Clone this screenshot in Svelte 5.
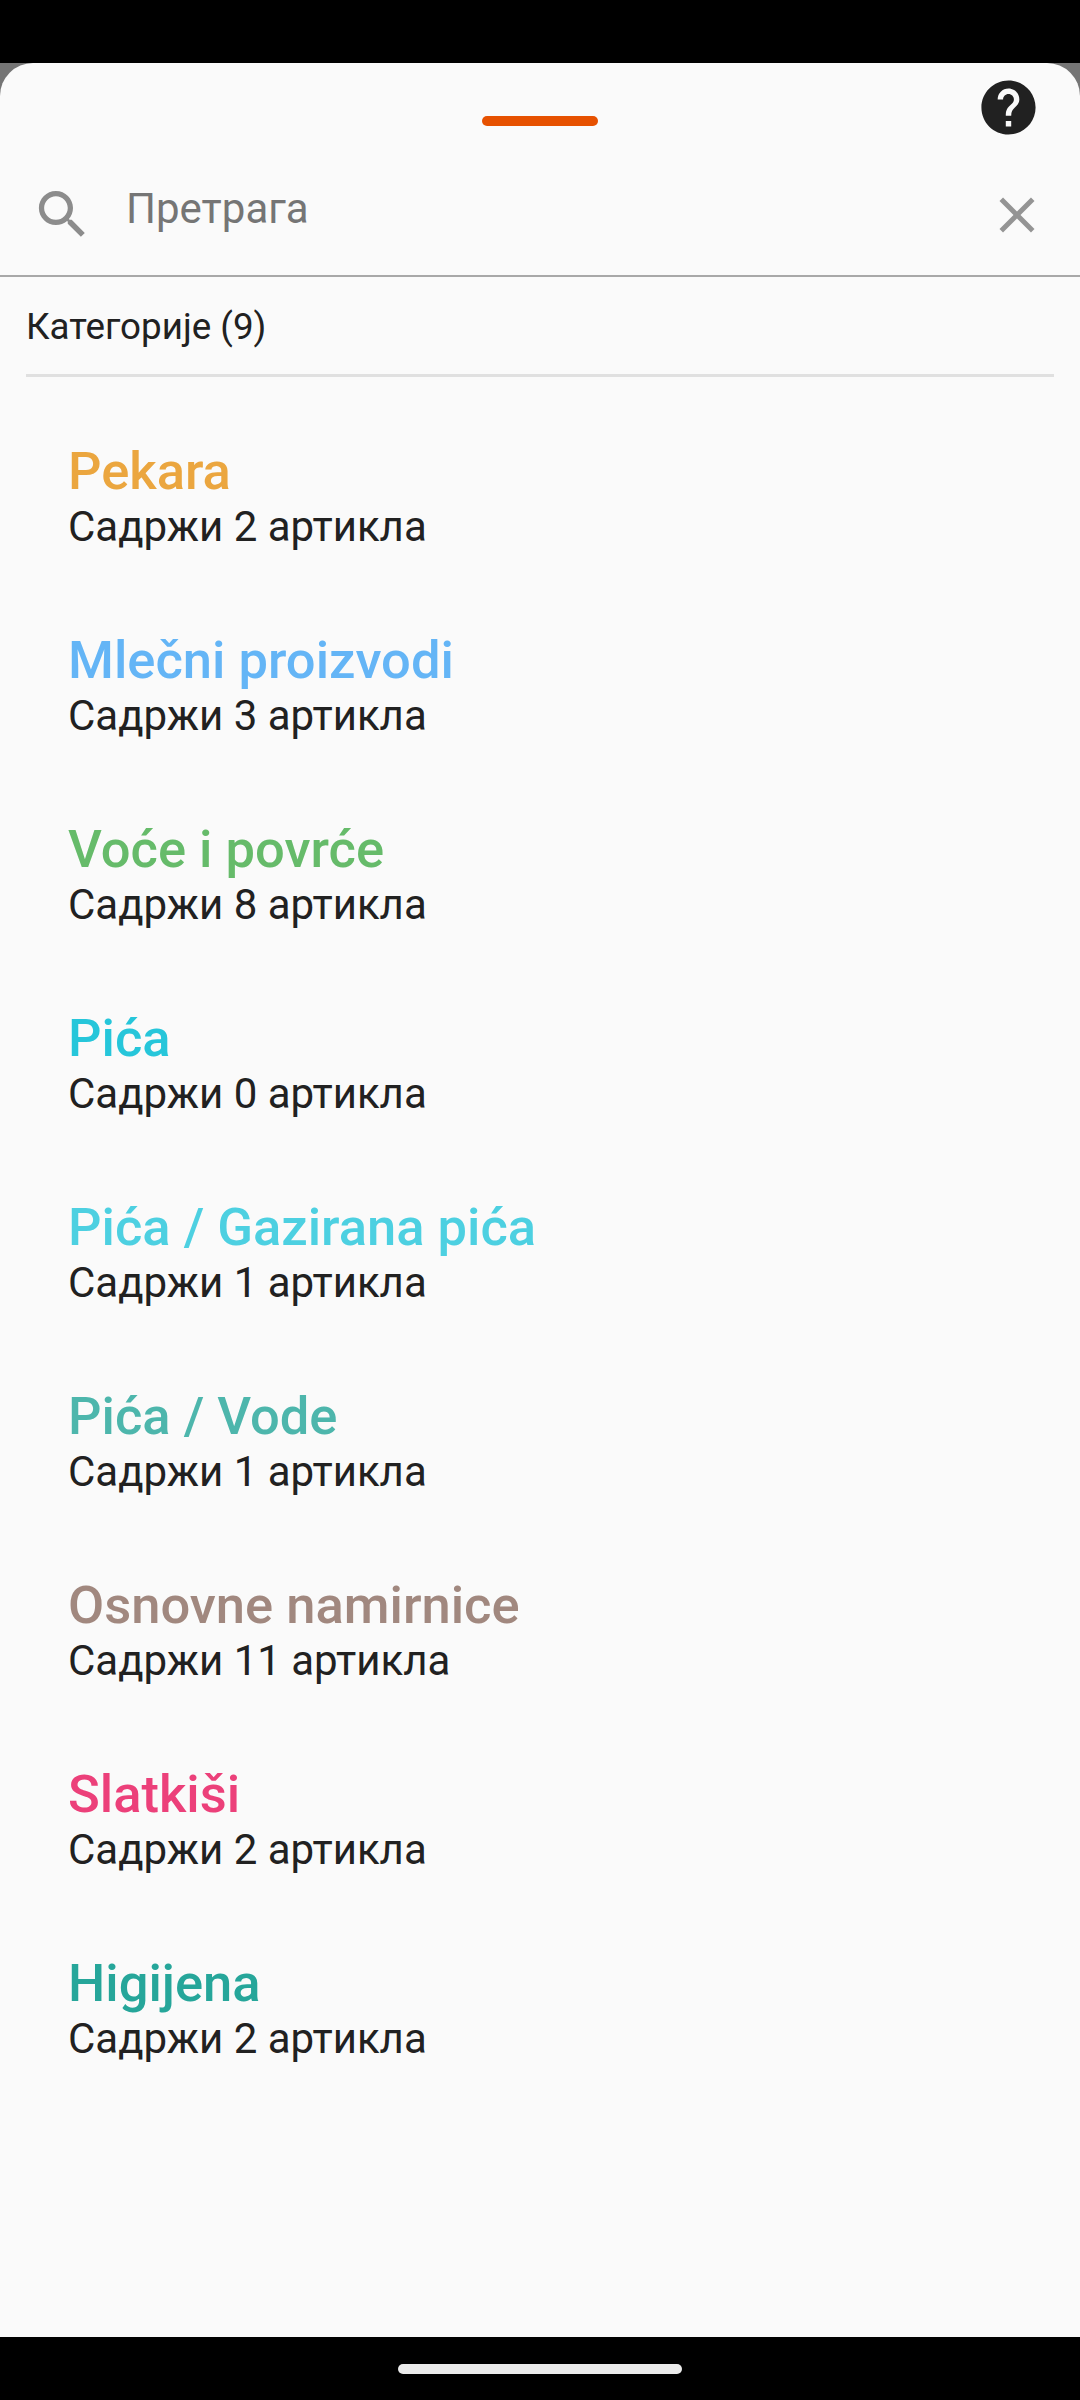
<script>
  const items = [
    { name: 'Pekara', color: '#eba63f', n: 2 },
    { name: 'Mlečni proizvodi', color: '#64b5f6', n: 3 },
    { name: 'Voće i povrće', color: '#66bb6a', n: 8 },
    { name: 'Pića', color: '#26c6da', n: 0 },
    { name: 'Pića / Gazirana pića', color: '#4dd0e1', n: 1 },
    { name: 'Pića / Vode', color: '#4db6ac', n: 1 },
    { name: 'Osnovne namirnice', color: '#a1887f', n: 11 },
    { name: 'Slatkiši', color: '#ec407a', n: 2 },
    { name: 'Higijena', color: '#26a69a', n: 2 }
  ];
</script>

<div class="screen">
  <div class="status"></div>
  <div class="backdrop">
    <div class="sheet">
      <div class="handle"></div>
      <svg class="help" viewBox="0 0 24 24" width="65" height="65"><path fill="#212121" d="M12 2C6.48 2 2 6.48 2 12s4.48 10 10 10 10-4.48 10-10S17.52 2 12 2zm1 17h-2v-2h2v2zm2.07-7.75l-.9.92C13.45 12.9 13 13.5 13 15h-2v-.5c0-1.1.45-2.1 1.17-2.83l1.24-1.26c.37-.36.59-.86.59-1.41 0-1.1-.9-2-2-2s-2 .9-2 2H8c0-2.21 1.79-4 4-4s4 1.79 4 4c0 .88-.36 1.68-.93 2.25z"/></svg>
      <div class="search">
        <svg viewBox="0 0 24 24" width="63" height="63"><path fill="#8c8c8c" d="M15.5 14h-.79l-.28-.27C15.41 12.59 16 11.11 16 9.5 16 5.91 13.09 3 9.5 3S3 5.91 3 9.5 5.91 16 9.5 16c1.61 0 3.09-.59 4.23-1.57l.27.28v.79l5 4.99L20.49 19l-4.99-5zm-6 0C7.01 14 5 11.99 5 9.5S7.01 5 9.5 5 14 7.01 14 9.5 11.99 14 9.5 14z"/></svg>
        <span class="placeholder">Претрага</span>
        <svg class="close" viewBox="0 0 24 24" width="60" height="60"><path fill="#949494" d="M19 6.41L17.59 5 12 10.59 6.41 5 5 6.41 10.59 12 5 17.59 6.41 19 12 13.41 17.59 19 19 17.59 13.41 12z"/></svg>
      </div>
      <div class="cat-title">Категорије (9)</div>
      <div class="list">
        {#each items as item}
          <div class="item">
            <div class="name" style="color: {item.color}">{item.name}</div>
            <div class="count">Садржи {item.n} артикла</div>
          </div>
        {/each}
      </div>
    </div>
  </div>
  <div class="nav"><div class="pill"></div></div>
</div>

<style>
  :global(body) {
    margin: 0;
    background: #000;
  }
  .screen {
    width: 1080px;
    height: 2400px;
    display: flex;
    flex-direction: column;
    font-family: Roboto, "Noto Sans", sans-serif;
    overflow: hidden;
  }
  .status {
    height: 63px;
    background: #000;
    flex: none;
  }
  .backdrop {
    flex: 1;
    background: #757575;
    display: flex;
    min-height: 0;
  }
  .sheet {
    position: relative;
    flex: 1;
    background: #fafafa;
    border-radius: 33px 33px 0 0;
    padding-top: 53px;
    box-sizing: border-box;
  }
  .handle {
    width: 116px;
    height: 10px;
    border-radius: 5px;
    background: #e65100;
    margin: 0 auto;
  }
  .help {
    position: absolute;
    top: 12px;
    right: 39px;
  }
  .search {
    height: 151px;
    box-sizing: border-box;
    border-bottom: 2px solid #a8a8a8;
    display: flex;
    align-items: center;
    padding: 28px 33px 0 31px;
  }
  .search svg {
    flex: none;
    display: block;
  }
  .placeholder {
    flex: 1;
    margin: 0 0 13px 32px;
    font-size: 42px;
    color: #757575;
  }
  .cat-title {
    height: 100px;
    box-sizing: border-box;
    margin: 0 26px;
    border-bottom: 3px solid #e0e0e0;
    font-size: 36.75px;
    line-height: 99px;
    color: #212121;
  }
  .list {
    padding: 65px 0 0 68px;
  }
  .item {
    height: 189px;
  }
  .name {
    font-size: 52.5px;
    font-weight: 500;
    line-height: 58px;
  }
  .count {
    font-size: 42px;
    line-height: 54px;
    color: #212121;
  }
  .nav {
    height: 63px;
    flex: none;
    background: #000;
    box-sizing: border-box;
    padding-top: 27px;
  }
  .pill {
    width: 284px;
    height: 10px;
    border-radius: 5px;
    background: #ebebeb;
    margin: 0 auto;
  }
</style>
